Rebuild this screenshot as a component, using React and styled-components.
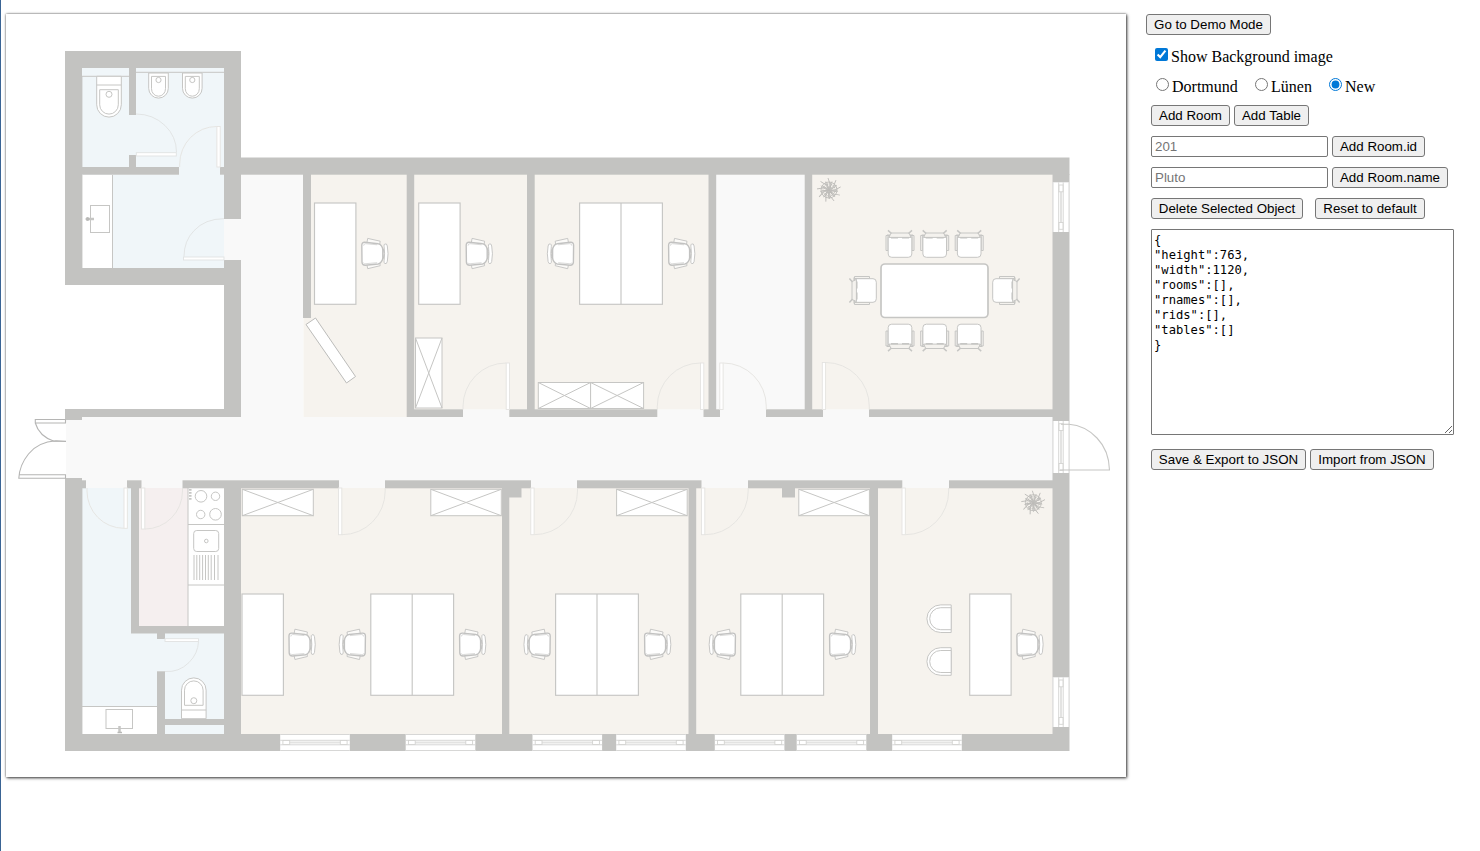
import React from "react";
import styled, { createGlobalStyle } from "styled-components";

const GlobalStyle = createGlobalStyle`
  * { box-sizing: border-box; }
  body { margin: 0; background: #fff; overflow: hidden; color: #000; font-family: "Liberation Serif", serif; font-size: 16px; }
`;

const Page = styled.main`
  display: flex;
  align-items: flex-start;
  height: 851px;
  border-left: 1px solid #3a6494;
  padding: 14px 0 0 5px;
`;
const Board = styled.div`
  flex: none;
  width: 1120px;
  height: 763px;
  background: #fff;
  box-shadow: 1px 1px 3px rgba(0, 0, 0, 0.7), 0 0 2px rgba(0, 0, 0, 0.55);
`;
const Plan = styled.svg`
  display: block;
  width: 100%;
  height: 100%;
`;
const Panel = styled.aside`
  display: flex;
  flex-direction: column;
  align-items: flex-start;
  padding-left: 20px;
`;
const Group = styled.div`
  display: flex;
  flex-direction: column;
  gap: 10px;
  padding: 10px 0 0 5px;
`;
const Row = styled.div`
  display: flex;
  align-items: center;
  gap: ${(p) => p.$gap ?? 4}px;
  height: ${(p) => p.$height ?? 21}px;
  padding-left: ${(p) => p.$indent ?? 0}px;
  margin-top: ${(p) => p.$top ?? 0}px;
`;
const Button = styled.button`
  width: ${(p) => p.$width}px;
  height: 21px;
  padding: 0;
  border: 1px solid #767676;
  border-radius: 3px;
  background: #efefef;
  color: #000;
  font: 13.333px/15px "Liberation Sans", Arial, sans-serif;
  white-space: nowrap;
`;
const TextField = styled.input`
  width: 177px;
  height: 21px;
  padding: 1px 3px;
  border: 1px solid #767676;
  border-radius: 2px;
  font: 13.333px "Liberation Sans", Arial, sans-serif;
  &::placeholder { color: #757575; }
`;
const Choice = styled.label`
  display: flex;
  align-items: center;
  gap: 3px;
  width: ${(p) => p.$width}px;
  padding-top: 2px;
  line-height: 18px;
  white-space: nowrap;
`;
const Mark = styled.input`
  flex: none;
  width: 13px;
  height: 13px;
  margin: 0 0 5px;
  accent-color: #0078d7;
`;
const JsonArea = styled.textarea`
  display: block;
  width: 303px;
  height: 206px;
  padding: 3px 2px;
  border: 1px solid #767676;
  border-radius: 1px;
  color: #000;
  font: 12.17px/15px "DejaVu Sans Mono", monospace;
`;

const LINE = "#c6c6c4";
const WALL = "#c3c3c1";
const OFFICE = "#f6f3ee";
const BATH = "#f0f6f9";
const HALL = "#f9f9f9";

// Each area is [left, top, right, bottom, fill].
const areas = [
  [82, 68, 224, 268, BATH],
  [224, 219, 241, 260, HALL],
  [414, 409, 1053, 418, HALL],
  [241, 174, 303.5, 417, HALL],
  [303.5, 174, 407, 417, OFFICE],
  [414, 174, 709, 409.3, OFFICE],
  [716, 174, 805, 417, HALL],
  [812, 174, 1053, 409.3, OFFICE],
  [66, 417, 1053, 488, HALL],
  [82, 488, 131, 640, BATH],
  [82, 633, 224, 734, BATH],
  [139, 488, 188, 626, "#f5efef"],
  [188, 488, 224, 626, "#fff"],
  [241, 488, 1053, 734, OFFICE],
  [82, 706, 157, 734, "#fff"],
  [82, 175, 112.5, 268, "#fff"],
];
// Each wall is [left, top, right, bottom].
const walls = [
  [65, 51, 241, 68], [65, 68, 82, 285], [82, 268, 241, 285], [224, 68, 241, 219],
  [224, 260, 241, 417], [129, 68, 136, 115], [129, 155, 136, 167],
  [82, 167, 179, 174.7], [220, 167, 224, 174.7],
  [241, 157.5, 1069.5, 174.7], [303, 174, 311, 318], [406.7, 174, 414.2, 417],
  [527, 174, 534.7, 410], [708.5, 174, 716.2, 410], [804.7, 174, 812.2, 410],
  [414, 409.3, 463, 417], [509.3, 409.3, 657.3, 417], [703.5, 409.3, 720, 417],
  [766, 409.3, 823, 417], [869, 409.3, 1053, 417],
  [65, 409, 241, 417], [65, 417, 82, 420], [65, 478, 82, 751], [82, 480.3, 86, 488.3],
  [127, 480.3, 141.5, 488.3], [182.5, 480.3, 339, 488.3], [385, 480.3, 531, 488.3],
  [577, 480.3, 701.5, 488.3], [748, 480.3, 902.3, 488.3], [949, 480.3, 1053, 488.3],
  [131, 488, 139, 633.5], [139, 626, 224, 633.5], [224, 488, 241, 751],
  [157, 633, 165, 639], [157, 671.3, 165, 734], [165, 719, 224, 725],
  [502, 488, 509.3, 734], [688.5, 488, 696.2, 734], [870, 488, 878, 734],
  [509, 488, 521.5, 497.5], [782, 488, 795, 497.5],
  [82, 734, 1069.5, 751], [1052.5, 174, 1069.5, 734],
];
// Each desk is [left, top, number of halves].
const desks = [
  [314.5, 203, 1], [418.7, 203, 1], [579.6, 203, 2],
  [242, 594, 1], [370.8, 594, 2], [555.6, 594, 2], [740.8, 594, 2], [969.7, 594, 1],
];
// Each swivel chair is [front edge x, centre y, direction of the back].
const chairs = [
  [361.2, 253.7, 1], [465.6, 253.7, 1], [668, 253.7, 1], [574.2, 253.7, -1],
  [288.4, 644.5, 1], [366, 644.5, -1], [459, 644.5, 1], [550.8, 644.5, -1],
  [644, 644.5, 1], [736, 644.5, -1], [829, 644.5, 1], [1016.3, 644.5, 1],
];
const cabinets = [
  [415.5, 338, 26.5, 70], [538.3, 382.5, 52.3, 26], [590.6, 382.5, 53, 26],
  [242.3, 489.3, 71, 26.4], [430.8, 489.3, 70.5, 26.4], [616.6, 489.3, 70.6, 26.4],
  [798.8, 489.3, 70.6, 26.4],
];
// Each door is [hinge x, hinge y, x direction of the opening, y direction of the leaf, size].
const doors = [
  [509.5, 409.5, -1, -1, 46.5], [703.8, 409.5, -1, -1, 46.5], [719.8, 409.5, 1, -1, 46.5],
  [822.3, 409.5, 1, -1, 47], [338.5, 488, 1, 1, 46.7], [530.8, 488, 1, 1, 46.7],
  [701.5, 488, 1, 1, 46.7], [902, 488, 1, 1, 46.7], [127.3, 488, -1, 1, 40.3],
  [141.5, 488, 1, 1, 41], [220.2, 167, -1, -1, 40.5],
];
const bottomWindows = [280.2, 405.7, 532.5, 616.2, 714.8, 796.7, 892.2];

const SwivelChair = ({ x, y, dir }) => (
  <g transform={`translate(${x} ${y}) scale(${dir} 1)`} stroke="#c2c2c1" strokeWidth=".9" fill="#fff">
    <path d="M5.8-11.5 6.5-15.3 19-12.5 18.5-9.5M5.8 11.5 6.5 15 19 12 18.5 9" fill="#fbfaf8" />
    <path d="M22-5q2 5 0 10M20-7l3 4M20 7l3-4" fill="none" />
    <path d="M23.6-9.7q2-1 2.5 2 1.5 7.7 0 15.5-.7 3-2.6 2-1-1-.6-3 1-7 0-14-.4-2 .7-2.5Z" />
    <path d="M3.5-11.4 17-10q2 0 3.2 2.2 1.4 2 1.4 4V4q0 2-1.4 4-1.2 2-3.2 2.3L4 11.5Q1 11.5.8 8.5L.6-8.5Q.6-11.5 3.5-11.4Z" strokeWidth="1.4" />
    <path d="M2.4-8q0-2 2-2L16-8.900M2.2 9q.8 1.4 2.4 1L16 9" fill="none" strokeWidth=".6" />
  </g>
);

const MeetingChair = ({ x, y, turn }) => (
  <g transform={`translate(${x} ${y}) rotate(${turn})`} stroke="#c6c6c4" strokeWidth="1" fill="#f4f2ee">
    <path d="M-14-8.5h2V6.5h-2ZM12-8.5h2V6.5h-2Z" />
    <path d="M-11.8-7V10q0 3.3 3.5 3.3H8.3q3.5 0 3.5-3.3V-7Z" fill="#fff" />
    <path d="M-9-11H9l2 4.4H-11Z" />
    <path d="M-12-13.6-8.5-10.5M12-13.6 8.5-10.5M-13-8.8h3M13-8.8h-3M-9-6.2H-2M2-6.2H9" fill="none" strokeWidth="1.5" />
  </g>
);

const Cabinet = ({ x, y, w, h }) => (
  <g stroke={LINE}>
    <rect x={x} y={y} width={w} height={h} fill="#fff" />
    <path d={`M${x} ${y}l${w} ${h}M${x + w} ${y}l${-w} ${h}`} />
  </g>
);

const Door = ({ x, y, dx, dy, size }) => (
  <g transform={`translate(${x} ${y}) scale(${dx} ${dy})`} fill="none" stroke="#e4e3e0" strokeWidth=".9">
    <path d={`M3.5 ${size}A${size - 3.5} ${size - 3} 0 0 0 ${size} 3V0`} />
    <rect x="0" y="0" width="3.3" height={size} fill="#fff" />
  </g>
);

const WindowFrame = ({ length }) => (
  <g fill="#fff" stroke="#d3d3d1" strokeWidth=".9">
    <rect width={length} height="17" stroke="none" />
    <path d={`M0 .5H${length}M0 16.5H${length}`} />
    <path d={`M0 6.3H${length}M0 10.8H${length}`} />
    <rect x="9" y="7.5" width={length - 18} height="2" fill="#e3e3e2" stroke="none" />
    <rect x="2.7" y="6.5" width="6.8" height="4" />
    <rect x={length - 9.5} y="6.5" width="6.8" height="4" />
  </g>
);

const Toilet = ({ x, y, flip }) => (
  <g transform={`translate(${x} ${y}) scale(1 ${flip ? -1 : 1})`} fill="#fff" stroke={LINE}>
    <path d="M-12.3 0V28.5a12.3 12.3 0 0 0 24.6 0V0ZM-12.3 8.7H12.3" />
    <path d="M-9.3 13.4V28.5a9.3 9.3 0 0 0 18.6 0V13.4Z" />
    <circle cx="0" cy="18" r="3" />
  </g>
);

const Bidet = ({ x }) => (
  <g transform={`translate(${x} 73)`} fill="#fff" stroke={LINE}>
    <path d="M-9.8 0V15.3a9.8 9.8 0 0 0 19.6 0V0Z" />
    <path d="M-7 3.4V15.7a7 7.5 0 0 0 14 0V3.4Z" />
    <circle cy="7" r="2.6" />
  </g>
);

const Plant = ({ x, y }) => (
  <g transform={`translate(${x} ${y})`} fill="none" stroke="#bdbcb9" strokeWidth=".9">
    <circle r="8" />
    <circle r="6" strokeDasharray="3 1" />
    {[0, 40, 80, 120, 160, 200, 240, 280, 320].map((angle) => (
      <path key={angle} transform={`rotate(${angle})`} d="M0 0 1-6-1-12M1-6 3-8.5M0 0 3-7M0-2-2-5" />
    ))}
  </g>
);

const Armchair = ({ y }) => (
  <g transform={`translate(926.7 ${y})`} fill="#fff" stroke={LINE}>
    <path d="M24.5-13.8H14a13.8 13.8 0 0 0 0 27.6H24.5Z" />
    <path d="M24.5-11H14a11 11 0 0 0 0 22H24.5Z" />
  </g>
);

const FloorPlan = () => (
  <Plan viewBox="6 14 1120 763" role="img" aria-label="Floor plan">
    {areas.map(([x, y, r, b, fill], i) => (
      <rect key={i} x={x} y={y} width={r - x} height={b - y} fill={fill} />
    ))}
    {walls.map(([x, y, r, b], i) => (
      <rect key={i} x={x} y={y} width={r - x} height={b - y} fill={WALL} />
    ))}
    {bottomWindows.map((x) => (
      <g key={x} transform={`translate(${x} 734)`}><WindowFrame length={69.6} /></g>
    ))}
    {[[182.3, 49.7], [421, 52], [677.3, 49.7]].map(([y, length]) => (
      <g key={y} transform={`translate(1069.5 ${y}) rotate(90)`}><WindowFrame length={length} /></g>
    ))}
    {doors.map(([x, y, dx, dy, size], i) => (
      <Door key={i} x={x} y={y} dx={dx} dy={dy} size={size} />
    ))}
    <g fill="none" stroke="#e0e2e2" strokeWidth=".9">
      <path d="M136 114q17 0 29 11.5 11.5 11 11.5 27" />
      <rect x="136.3" y="152.7" width="40" height="3.3" fill="#fff" />
      <path d="M224 218.7q-19 0-30 12-10 10-10 26" />
      <rect x="183.5" y="257" width="40.5" height="3" fill="#fff" />
      <path d="M165 671.5q14 1 24-9 9-9 9.5-21" />
      <rect x="165" y="638.7" width="33.5" height="2.8" fill="#fff" />
    </g>

    <g fill="none" stroke={LINE}>
      <path d="M82 76.3H129M136 72.3H224M112.5 175V268M82 706.5H157M188 488V626M188 524.5H224M188 585H224" />
      <path d="M82.4 76V167M82.4 175V268M82.4 488V734" strokeWidth=".5" />
      <rect x="90.5" y="205.5" width="19" height="27" fill="#fff" />
      <path d="M87 219H94" strokeWidth="2.5" />
      <circle cx="87.5" cy="219" r="1.5" fill="#b8b8b6" stroke="#b8b8b6" />
      <rect x="106" y="709.5" width="26.5" height="19" fill="#fff" />
      <path d="M119.5 726V733" strokeWidth="2.5" />
      <path d="M117.5 732.5H122" stroke="#b8b8b6" strokeWidth="1.5" />
      <circle cx="201" cy="496.3" r="5.8" />
      <circle cx="215.5" cy="496.3" r="4.2" />
      <circle cx="200.7" cy="514.5" r="4.2" />
      <circle cx="215.5" cy="514.3" r="5.8" />
      <path d="M190.3 489V501" strokeWidth="2.5" strokeDasharray="1.8 1.2" />
      <rect x="193.7" y="530.5" width="25" height="21" rx="3" />
      <circle cx="206.3" cy="541" r="1.8" />
      <path d="M194 555V580M196.8 555V580M199.7 555V580M202.6 555V580M205.5 555V580M208.3 555V580M211.2 555V580M214.5 555V580M218 555V580" />
    </g>
    <Toilet x={109} y={76.3} />
    <Toilet x={193.8} y={718.7} flip />
    <Bidet x={158.5} />
    <Bidet x={192.3} />

    <g fill="none" stroke="#b5b5b4" strokeWidth="1.1">
      <path d="M65.5 419.5H35.3V423H65.5V419.5M35.3 423Q39 436 54 441.3H66" />
      <path d="M66 441.5L56 440.8Q38 442 28.5 454 19.5 465 18.8 478.3H65.5V474.7H19.5" />
      <path d="M1061 424.3H1069Q1085 425.5 1097 438T1109.5 470H1060" stroke={LINE} />
    </g>

    {desks.map(([x, y, halves], i) => (
      <g key={i} fill="#fff" stroke={LINE} strokeWidth="1.15">
        <rect x={x} y={y} width={41.4 * halves} height="101.3" />
        {halves === 2 && <path d={`M${x + 41.4} ${y}v101.3`} />}
      </g>
    ))}
    {cabinets.map(([x, y, w, h], i) => <Cabinet key={i} x={x} y={y} w={w} h={h} />)}
    {chairs.map(([x, y, dir], i) => <SwivelChair key={i} x={x} y={y} dir={dir} />)}
    <path d="M306 324.5 315.5 318 355.5 376.5 346.5 383Z" fill="#fff" stroke="#bcbcba" />

    <rect x="881" y="264" width="107" height="53.5" rx="4" fill="#fff" stroke={LINE} strokeWidth="1.7" />
    {[900, 934.7, 969.2].map((x) => (
      <g key={x}>
        <MeetingChair x={x} y={244} turn={0} />
        <MeetingChair x={x} y={337.5} turn={180} />
      </g>
    ))}
    <MeetingChair x={863} y={290.5} turn={-90} />
    <MeetingChair x={1006} y={290.5} turn={90} />
    <Armchair y={618.7} />
    <Armchair y={661.5} />
    <Plant x={829} y={190} />
    <Plant x={1033.3} y={502.7} />
  </Plan>
);

const exported = `{
"height":763,
"width":1120,
"rooms":[],
"rnames":[],
"rids":[],
"tables":[]
}`;

export default function App() {
  return (
    <>
      <GlobalStyle />
      <Page>
        <Board><FloorPlan /></Board>
        <Panel>
          <Button $width={125}>Go to Demo Mode</Button>
          <Group>
            <Row $indent={4}>
              <Choice><Mark type="checkbox" defaultChecked />Show Background image</Choice>
            </Row>
            <Row $indent={5} $gap={0} $height={19}>
              <Choice $width={99}><Mark type="radio" name="site" />Dortmund</Choice>
              <Choice $width={74}><Mark type="radio" name="site" />Lünen</Choice>
              <Choice><Mark type="radio" name="site" defaultChecked />New</Choice>
            </Row>
            <Row>
              <Button $width={79}>Add Room</Button>
              <Button $width={75}>Add Table</Button>
            </Row>
            <Row>
              <TextField placeholder="201" />
              <Button $width={93}>Add Room.id</Button>
            </Row>
            <Row>
              <TextField placeholder="Pluto" />
              <Button $width={116}>Add Room.name</Button>
            </Row>
            <Row $gap={12}>
              <Button $width={152}>Delete Selected Object</Button>
              <Button $width={110}>Reset to default</Button>
            </Row>
            <JsonArea defaultValue={exported} spellCheck={false} />
            <Row $top={4}>
              <Button $width={155}>Save &amp; Export to JSON</Button>
              <Button $width={124}>Import from JSON</Button>
            </Row>
          </Group>
        </Panel>
      </Page>
    </>
  );
}
